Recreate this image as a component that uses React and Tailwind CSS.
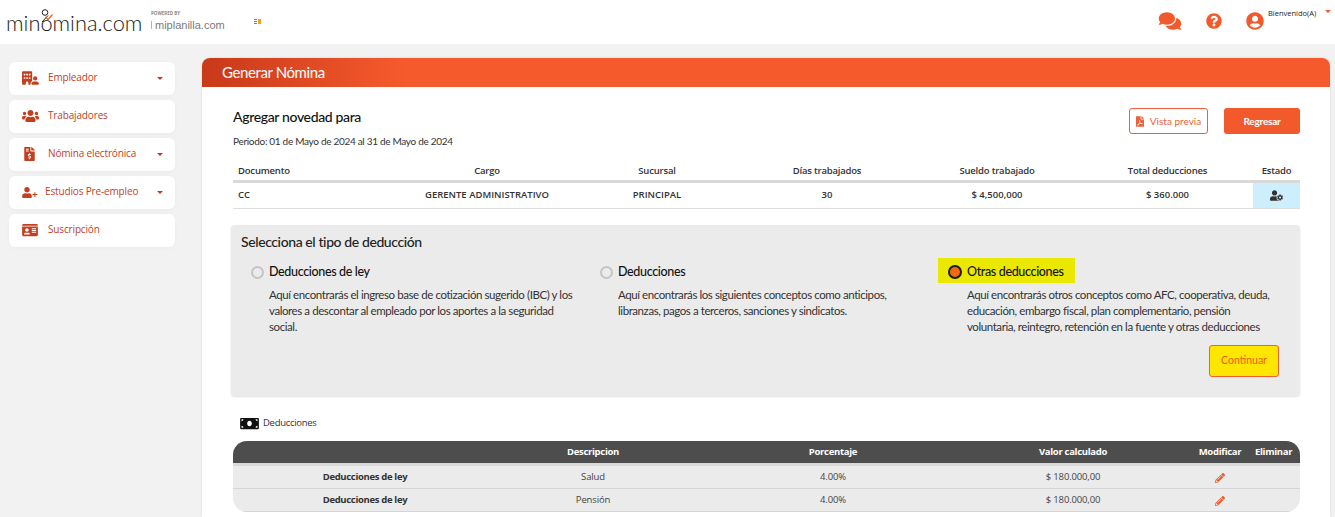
import React from "react";
import { FaComments, FaQuestionCircle, FaUserCircle, FaUsers, FaFileInvoiceDollar, FaUser, FaIdCard, FaMoneyBill, FaPencilAlt, FaFilePdf, FaUserCog } from "react-icons/fa";
import { FaBuildingUser } from "react-icons/fa6";

const Caret = ({ className = "" }) => (
  <span className={`w-0 h-0 border-x-[3px] border-x-transparent border-t-[3px] ${className}`} />
);

const menu = [
  { label: "Empleador", icon: <FaBuildingUser className="w-[17px] h-[14px]" />, caret: true },
  { label: "Trabajadores", icon: <FaUsers className="w-[17px] h-[14px]" /> },
  { label: "Nómina electrónica", icon: <FaFileInvoiceDollar className="w-[11px] h-[14px] ml-[2px]" />, caret: true },
  {
    label: "Estudios Pre-empleo",
    icon: (
      <span className="flex items-end">
        <FaUser className="w-[10px] h-[11px]" />
        <span className="text-[10px] leading-[7px] font-bold">+</span>
      </span>
    ),
    caret: true,
    tight: true,
  },
  { label: "Suscripción", icon: <FaIdCard className="w-[16px] h-[14px]" /> },
];

const options = [
  {
    title: "Deducciones de ley",
    text: "Aquí encontrarás el ingreso base de cotización sugerido (IBC) y los valores a descontar al empleado por los aportes a la seguridad social.",
  },
  {
    title: "Deducciones",
    text: "Aquí encontrarás los siguientes conceptos como anticipos, libranzas, pagos a terceros, sanciones y sindicatos.",
  },
  {
    title: "Otras deducciones",
    text: "Aquí encontrarás otros conceptos como AFC, cooperativa, deuda, educación, embargo fiscal, plan complementario, pensión voluntaria, reintegro, retención en la fuente y otras deducciones",
    active: true,
  },
];

const lato = { fontFamily: "Lato, sans-serif" };
const open = { fontFamily: "'Open Sans', sans-serif" };

export default function App() {
  return (
    <div className="w-[1335px] h-[517px] overflow-hidden bg-[#f2f2f2] flex flex-col" style={lato}>
      <header className="h-[44px] shrink-0 bg-white flex items-center pl-[6px] pr-[4px]">
        <div className="relative w-[137px] text-[21.8px] leading-none text-[#1a1a1a] font-light pt-[2px] whitespace-nowrap">
          minomina.com
          <svg className="absolute left-[34px] top-[-1px] w-[18px] h-[14px]" viewBox="0 0 18 14" fill="none">
            <circle cx="5" cy="3.5" r="2.8" stroke="#222" strokeWidth="1" />
            <path d="M2 13 L8 6.5" stroke="#222" strokeWidth="1" />
            <path d="M5.5 8 L8 10.5 L12.5 5.5" stroke="#f0641e" strokeWidth="1.3" />
          </svg>
        </div>
        <div className="ml-[8px] flex flex-col mt-[-3px]">
          <span className="text-[4.5px] leading-[6px] font-bold text-[#8a8a8a]" style={open}>POWERED BY</span>
          <span className="flex items-center text-[11px] leading-[14px] text-[#7a7a7a] mt-[2px]" style={{ fontFamily: "'Liberation Sans', sans-serif" }}>
            <span className="w-[1px] h-[8px] bg-[#f4a07a] mr-[3px]" />miplanilla.com
          </span>
        </div>
        <div className="ml-[29px] flex gap-[1px] items-center mt-[-1px]">
          <span className="flex flex-col gap-[1px] w-[3px]">
            <span className="h-[1px] bg-[#e8581c]" /><span className="h-[1px] bg-[#e8581c]" /><span className="h-[1px] bg-[#e8581c]" />
          </span>
          <span className="w-[3px] h-[5px] bg-[#f0a020]" />
        </div>
        <div className="ml-auto flex items-center text-[#f25a2b] h-full pb-[3px]">
          <FaComments className="w-[24px] h-[20px]" />
          <FaQuestionCircle className="w-[16px] h-[16px] ml-[24px]" />
          <FaUserCircle className="w-[18px] h-[18px] ml-[24px] mt-[1px]" />
          <div className="ml-[4px] self-start flex items-start w-[63px] pt-[8px]">
            <span className="text-[7.5px] leading-[10px] text-[#222]" style={open}>Bienvenido(A)</span>
            <Caret className="ml-auto mt-[2px] border-t-[#f25a2b]" />
          </div>
        </div>
      </header>

      <div className="flex flex-1 min-h-0">
        <aside className="w-[202px] shrink-0 pl-[9px] pr-[27px] pt-[18px] flex flex-col gap-[5px]">
          {menu.map((m) => (
            <div key={m.label} className="h-[33px] bg-white rounded-[6px] flex items-center pl-[13px] pr-[12px] text-[#c2401f] shadow-[0_1px_4px_rgba(0,0,0,0.03)]">
              <span className={`${m.tight ? "w-[23px]" : "w-[26px]"} shrink-0 flex items-center pb-[1px]`}>{m.icon}</span>
              <span className="text-[10px] font-medium whitespace-nowrap tracking-[-0.15px] pb-[2px]" style={open}>{m.label}</span>
              {m.caret && <Caret className="ml-auto border-t-[#c8391a] mb-[1px]" />}
            </div>
          ))}
        </aside>

        <main className="w-[1128px] shrink-0 mt-[14px] rounded-t-[8px] bg-white shadow-[0_0_3px_rgba(0,0,0,0.1)] overflow-hidden">
          <div className="h-[29px] bg-gradient-to-r from-[#c8391a] to-[#f55a2c] to-[18%] flex items-center pl-[20px] text-white text-[15px] tracking-[-0.4px]">
            Generar Nómina
          </div>
          <div className="pl-[31px] pr-[30px]">
            <div className="flex justify-between pt-[21px] h-[76px]">
              <div>
                <div className="text-[14px] leading-[18px] font-medium text-[#111] tracking-[-0.35px]">Agregar novedad para</div>
                <div className="text-[10px] leading-[13px] text-[#333] mt-[9px] tracking-[-0.3px]">Periodo: 01 de Mayo de 2024 al 31 de Mayo de 2024</div>
              </div>
              <div className="flex gap-[16px] h-[26px]">
                <button className="w-[79px] h-[26px] border border-[#f0603a] rounded-[3px] flex items-center justify-center gap-[6px] text-[#f0603a] text-[10px]">
                  <FaFilePdf className="w-[8px] h-[11px]" />Vista previa
                </button>
                <button className="w-[76px] h-[26px] bg-[#f25a2b] rounded-[3px] text-white text-[10px] font-bold tracking-[-0.2px]">Regresar</button>
              </div>
            </div>

            <div className="grid grid-cols-[169px_170px_170px_170px_170px_171px_47px] text-[9.5px] h-[20px] items-center text-center text-[#333] font-semibold tracking-[-0.2px] border-b-[3px] border-[#d9d9d9]" style={open}>
              <span className="text-left pl-[5px]">Documento</span>
              <span>Cargo</span><span>Sucursal</span><span>Días trabajados</span><span>Sueldo trabajado</span><span>Total deducciones</span><span>Estado</span>
            </div>
            <div className="grid grid-cols-[169px_170px_170px_170px_170px_171px_47px] text-[9.5px] h-[26px] items-center text-center text-[#333] font-semibold border-b border-[#dedede]" style={open}>
              <span className="text-left pl-[5px]">CC</span>
              <span>GERENTE ADMINISTRATIVO</span><span>PRINCIPAL</span><span>30</span><span>$ 4,500,000</span><span>$ 360.000</span>
              <span className="h-full bg-[#cdeefd] flex items-center justify-center text-[#333]"><FaUserCog className="w-[13px] h-[11px]" /></span>
            </div>

            <section className="mt-[16px] ml-[-2px] w-[1069px] h-[171px] bg-[#ebebeb] rounded-[4px] shadow-[0_1px_2px_rgba(0,0,0,0.12)] pl-[10px] pr-[21px] pt-[8px]">
              <h2 className="text-[14px] leading-[18px] font-medium text-[#222] tracking-[-0.4px]">Selecciona el tipo de deducción</h2>
              <div className="grid grid-cols-[349px_349px_1fr] mt-[7px] ml-[10px]">
                {options.map((o) => (
                  <div key={o.title}>
                    <div className={`flex items-center w-fit h-[25px] pt-[3px] ${o.active ? "bg-[#ebe800] pr-[11px] pl-[10px] ml-[-11px]" : ""}`}>
                      <span className={`rounded-full shrink-0 ${o.active ? "w-[14px] h-[14px] bg-[#f26a0f] border-[2.5px] border-[#1c1c1c]" : "w-[13px] h-[13px] bg-[#ebebeb] border-2 border-[#c4c4c4]"}`} />
                      <span className="ml-[5px] text-[12.5px] font-medium text-[#111] whitespace-nowrap tracking-[-0.35px]">{o.title}</span>
                    </div>
                    <p className="mt-[4px] pl-[18px] w-[330px] text-[11.5px] leading-[16px] text-[#333] tracking-[-0.42px]">{o.text}</p>
                  </div>
                ))}
              </div>
              <div className="flex justify-end mt-[10px]">
                <button className="w-[70px] h-[32px] bg-[#ffe600] border border-[#f0603a] rounded-[3px] text-[#f05a14] text-[10.5px]">Continuar</button>
              </div>
            </section>

            <div className="flex items-center h-[20px] mt-[17px] ml-[7px] text-[#333]">
              <FaMoneyBill className="w-[19px] h-[15px] text-[#111]" />
              <span className="ml-[4px] text-[9.5px] tracking-[-0.3px]" style={open}>Deducciones</span>
            </div>

            <div className="mt-[8px] rounded-[14px] overflow-hidden" style={open}>
              <div className="grid grid-cols-[248px_224px_256px_224px_70px_45px] h-[25px] bg-[#4d4d4d] border-b-[3px] border-[#d9d9d9] items-center text-center text-white font-bold text-[9.5px] tracking-[-0.3px]">
                <span /><span>Descripcion</span><span>Porcentaje</span><span>Valor calculado</span><span>Modificar</span><span className="pr-[9px]">Eliminar</span>
              </div>
              {["Salud", "Pensión"].map((d) => (
                <div key={d} className="grid grid-cols-[248px_224px_256px_224px_70px_45px] h-[23px] pt-[1px] bg-[#ebebeb] border-b border-[#d6d6d6] items-center text-center text-[9.5px] text-[#444] tracking-[-0.15px]">
                  <span className="pl-[16px] font-bold text-[#333] tracking-[-0.33px]">Deducciones de ley</span>
                  <span>{d}</span><span>4.00%</span><span>$ 180.000,00</span>
                  <span className="flex justify-center"><FaPencilAlt className="w-[10px] h-[10px] text-[#f25a2b]" /></span>
                  <span />
                </div>
              ))}
            </div>
          </div>
        </main>
      </div>
    </div>
  );
}
